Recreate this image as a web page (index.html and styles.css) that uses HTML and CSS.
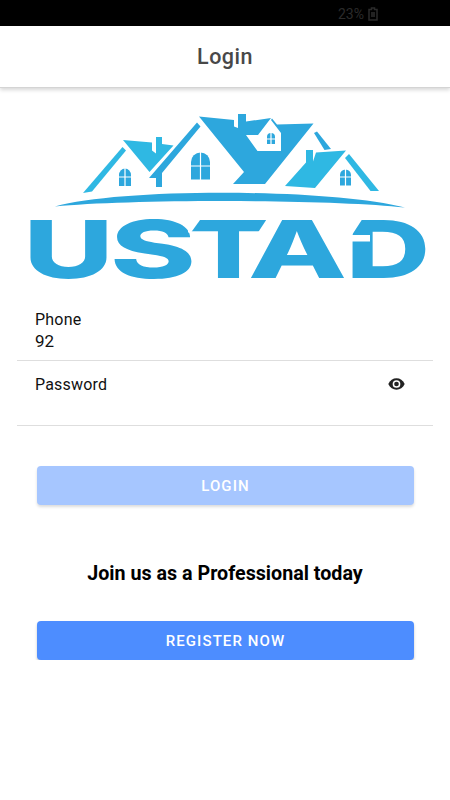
FILE: index.html
```html
<!DOCTYPE html>
<html lang="en">
<head>
  <meta charset="UTF-8">
  <meta name="viewport" content="width=device-width, initial-scale=1.0">
  <title>Login</title>
  <link rel="stylesheet" href="styles.css">
</head>
<body>
  <div class="status-bar">
    <span>23%</span>
    <svg class="battery" viewBox="0 0 10 14" width="10" height="14">
      <path d="M3.5 1h3v1.5H9V13H1V2.500h2.500z" fill="none" stroke="#2b2b2b" stroke-width="1.500"/>
      <path d="M3 5h4v5H3z" fill="#222"/>
    </svg>
  </div>

  <header class="toolbar">
    <h1>Login</h1>
  </header>

  <main>
    <svg class="logo" viewBox="17 100 416 204" width="416" height="204" role="img" aria-label="Ustad">
      <!-- left and right houses -->
      <g fill="#2fb8e3">
        <path d="M122.500 147l3.500 3.500L92 191.500 83 193z"/>
        <path d="M123 140l29 2.500v8l4 3V137h6v7l11.500 1.500L149.500 172z"/>
        <path d="M285 186l21-23.500V150h7v11.500l3-9 30-2L315 188z"/>
        <path d="M345 158l4-4 30 37h-8.500z"/>
      </g>
      <!-- middle house -->
      <g fill="#2da7dd">
        <path d="M197 122.500l3.500 4L162 173v14h-6v-9h-7z"/>
        <path d="M199 116.500l35 3.500v6.500l4 1.500V114h8v7.500l25-3.500-13 17h-12l11.500 16H281v-18l-10-13 1-1.500 5 6 36.500-1L265 184h-32l11-12z"/>
        <path d="M314 133l3-1.500L331 149l-6.500 1z"/>
        <path d="M55 206.500C120 188 325 188 405 207.500 330 199 130 199 55 206.500z"/>
      </g>
      <!-- windows -->
      <g fill="#2da7dd">
        <path d="M119 186v-11a6 6.500 0 0 1 12 0v11z"/>
        <path d="M191 179.500V162a9.500 9.500 0 0 1 19 0v17.500z"/>
        <path d="M267 144v-7a4 4 0 0 1 8 0v7z"/>
        <path d="M340 185.500V175a5.500 5.500 0 0 1 11 0v10.500z"/>
      </g>
      <path d="M125 168v18M119 177h12M200.500 152v28M191 166h19M271 133v11M267 139h8M345.500 169v17M340 177h11" stroke="#fff" stroke-width="1.200"/>
      <!-- name -->
      <g class="logo-name">
        <text x="23.500" y="277.500" textLength="90" lengthAdjust="spacingAndGlyphs">U</text>
        <text x="110" y="277.500" textLength="86" lengthAdjust="spacingAndGlyphs">S</text>
        <text x="187" y="277.500" textLength="83" lengthAdjust="spacingAndGlyphs">T</text>
        <text x="248" y="277.500" textLength="99" lengthAdjust="spacingAndGlyphs">A</text>
        <text x="346" y="277.500" textLength="84" lengthAdjust="spacingAndGlyphs">D</text>
      </g>
      <!-- slanted cuts through the letters -->
      <g fill="#fff">
        <path d="M188 218h13.500L191 232.500h-3z"/>
        <path d="M267.500 218v17.500H256z"/>
        <path d="M350 218h13l-11 17h-2zM350 235h20v6.500h-20z"/>
      </g>
    </svg>

    <form class="login-form">
      <div class="field">
        <label for="phone">Phone</label>
        <input type="tel" id="phone" value="92">
      </div>
      <div class="field">
        <label for="password">Password</label>
        <input type="password" id="password">
        <svg class="eye" viewBox="0 0 17 12" width="17" height="12">
          <path d="M.3 6C2 2.300 5 .3 8.500.3s6.500 2 8.200 5.700c-1.700 3.700-4.700 5.700-8.200 5.700S2 9.700.3 6z" fill="#222"/>
          <circle cx="8.500" cy="6" r="3.100" fill="#222" stroke="#fff" stroke-width="1.500"/>
        </svg>
      </div>
      <button type="submit" class="btn btn-login" disabled>LOGIN</button>
    </form>

    <h2>Join us as a Professional today</h2>
    <button type="button" class="btn">REGISTER NOW</button>
  </main>
</body>
</html>
```
FILE: styles.css
```css
* { box-sizing: border-box; }
body { margin: 0; font-family: Roboto, sans-serif; background-color: #fff; color: #111; }
h1, h2 { margin: 0; }
.status-bar { display: flex; align-items: center; gap: 4px; height: 26px; padding: 2px 0 0 338px; background-color: #000; color: #2b2b2b; font-size: 14px; }
.toolbar { display: flex; align-items: center; justify-content: center; height: 62px; border-bottom: 1px solid #d4d4d4; box-shadow: 0 2px 4px rgba(0, 0, 0, 0.16); }
.toolbar h1 { color: #484848; font-size: 21.500px; font-weight: 500; letter-spacing: 0.500px; }
main { display: flex; flex-direction: column; padding: 12px 17px 0; }
.logo { display: block; overflow: visible; }
.logo-name { fill: #2da7dd; font-family: Inter, sans-serif; font-size: 80px; font-weight: 800; }
.login-form { display: flex; flex-direction: column; margin-top: -8px; }
.field { display: grid; grid-template-columns: 1fr auto; height: 65px; padding: 14px 28px 0 18px; border-bottom: 1px solid #dedede; align-content: start; }
.field label { font-size: 16px; line-height: 20px; letter-spacing: 0.2px; }
.field input { grid-column: 1; width: 100%; height: 22px; padding: 0; border: 0; outline: 0; background: none; font: 17px Roboto, sans-serif; color: #111; }
.eye { grid-column: 2; grid-row: 1; align-self: center; margin-bottom: 3px; }
.btn { height: 39px; margin: 0 19px 0 20px; border: 0; border-radius: 4px; background-color: #4d8dff; color: #fff; font: 500 15px Roboto, sans-serif; letter-spacing: 1.100px; box-shadow: 0 2px 3px rgba(0, 0, 0, 0.22); }
.btn-login { margin-top: 40px; background-color: #a6c6ff; box-shadow: 0 2px 3px rgba(0, 0, 0, 0.14); }
h2 { margin: 56px 0 35px; font-size: 19.700px; line-height: 25px; font-weight: 700; text-align: center; color: #000; }
```
